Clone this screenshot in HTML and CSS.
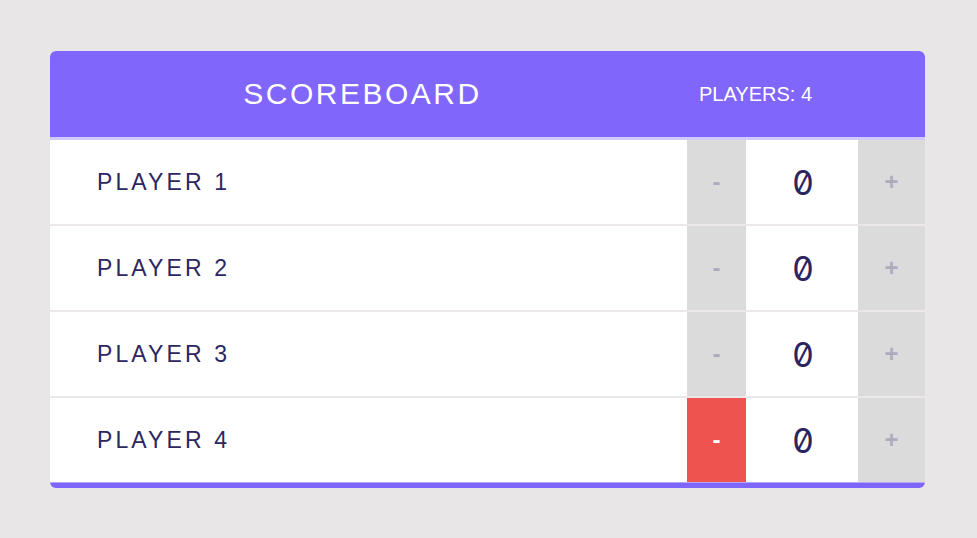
FILE: index.html
```html
<!DOCTYPE html>
<html>
<head>
<meta charset="utf-8">
<link rel="stylesheet" href="styles.css">
</head>
<body>
<div class="scoreboard">
  <header class="header">
    <h1 class="title">SCOREBOARD</h1>
    <div class="stats">PLAYERS: 4</div>
  </header>
  <div class="player">
    <div class="name">PLAYER 1</div>
    <button class="btn minus">-</button>
    <div class="score">0</div>
    <button class="btn plus">+</button>
  </div>
  <div class="player">
    <div class="name">PLAYER 2</div>
    <button class="btn minus">-</button>
    <div class="score">0</div>
    <button class="btn plus">+</button>
  </div>
  <div class="player">
    <div class="name">PLAYER 3</div>
    <button class="btn minus">-</button>
    <div class="score">0</div>
    <button class="btn plus">+</button>
  </div>
  <div class="player">
    <div class="name">PLAYER 4</div>
    <button class="btn minus active">-</button>
    <div class="score">0</div>
    <button class="btn plus">+</button>
  </div>
</div>
</body>
</html>
```

FILE: styles.css
```css
html, body {
  margin: 0;
  padding: 0;
}
body {
  background: #e8e6e6;
  font-family: "Liberation Sans", Arial, sans-serif;
}
.scoreboard {
  width: 875px;
  margin: 51px 0 0 50px;
  background: #fff;
  border-radius: 6px;
  overflow: hidden;
  border-bottom: 5px solid #7f66fb;
}
.header {
  display: grid;
  grid-template-columns: 625px 1fr;
  align-items: center;
  height: 86px;
  background: #8166fc;
  color: #fff;
  border-bottom: 3px solid #d3c9fb;
}
.title {
  margin: 0;
  font-weight: normal;
  font-size: 30px;
  letter-spacing: 2.5px;
  text-align: center;
}
.stats {
  padding-left: 24px;
  font-size: 20px;
}
.player {
  display: grid;
  grid-template-columns: 1fr 59px 112px 67px;
  height: 84px;
  border-bottom: 2px solid #ece7ea;
}
.player:last-child {
  border-bottom: 1px solid #b5a6fb;
}
.name {
  display: flex;
  align-items: center;
  padding-left: 47px;
  font-size: 23px;
  letter-spacing: 3.1px;
  color: #2d2660;
}
.btn {
  border: 0;
  margin: 0;
  padding: 0;
  background: #dcdbdc;
  color: #aeabbd;
  font-family: "Liberation Sans", Arial, sans-serif;
  font-weight: bold;
  font-size: 24px;
}
.btn.active {
  background: #ef5350;
  color: #fff;
}
.score {
  display: flex;
  align-items: center;
  justify-content: center;
  font-family: "Inter", sans-serif;
  font-variant-numeric: slashed-zero tabular-nums;
  font-size: 34px;
  color: #2b2460;
  padding-left: 2px;
}
```
